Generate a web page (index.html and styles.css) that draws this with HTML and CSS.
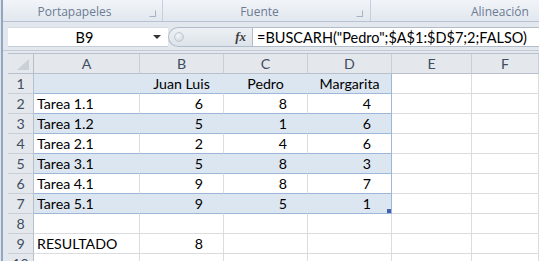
FILE: index.html
```html
<!DOCTYPE html>
<html lang="es">
<head>
    <meta charset="UTF-8">
    <title>BUSCARH</title>
    <link rel="stylesheet" href="styles.css">
</head>
<body>
    <div class="window">
        <!-- ribbon group captions -->
        <div class="ribbon">
            <div class="group group-clip">
                <span class="group-label">Portapapeles</span>
                <span class="launcher"></span>
            </div>
            <div class="group group-font">
                <span class="group-label">Fuente</span>
                <span class="launcher"></span>
            </div>
            <div class="group group-align">
                <span class="group-label">Alineación</span>
            </div>
        </div>

        <!-- name box + formula bar -->
        <div class="formula-bar">
            <div class="name-box">
                <span class="name">B9</span>
                <span class="dropdown"></span>
            </div>
            <div class="grip">
                <span class="grip-dot"></span>
                <span class="fx">fx</span>
            </div>
            <div class="formula">=BUSCARH("Pedro";$A$1:$D$7;2;FALSO)</div>
        </div>

        <!-- worksheet -->
        <div class="sheet">
            <div class="hd corner"><span class="corner-tri"></span></div>
            <div class="hd col">A</div>
            <div class="hd col">B</div>
            <div class="hd col">C</div>
            <div class="hd col">D</div>
            <div class="hd col">E</div>
            <div class="hd col">F</div>

            <div class="hd row">1</div>
            <div class="cell band"></div>
            <div class="cell band center">Juan Luis</div>
            <div class="cell band center">Pedro</div>
            <div class="cell band center last">Margarita</div>
            <div class="cell"></div>
            <div class="cell"></div>

            <div class="hd row">2</div>
            <div class="cell tbl">Tarea 1.1</div>
            <div class="cell tbl num">6</div>
            <div class="cell tbl num">8</div>
            <div class="cell tbl num last">4</div>
            <div class="cell"></div>
            <div class="cell"></div>

            <div class="hd row">3</div>
            <div class="cell band">Tarea 1.2</div>
            <div class="cell band num">5</div>
            <div class="cell band num">1</div>
            <div class="cell band num last">6</div>
            <div class="cell"></div>
            <div class="cell"></div>

            <div class="hd row">4</div>
            <div class="cell tbl">Tarea 2.1</div>
            <div class="cell tbl num">2</div>
            <div class="cell tbl num">4</div>
            <div class="cell tbl num last">6</div>
            <div class="cell"></div>
            <div class="cell"></div>

            <div class="hd row">5</div>
            <div class="cell band">Tarea 3.1</div>
            <div class="cell band num">5</div>
            <div class="cell band num">8</div>
            <div class="cell band num last">3</div>
            <div class="cell"></div>
            <div class="cell"></div>

            <div class="hd row">6</div>
            <div class="cell tbl">Tarea 4.1</div>
            <div class="cell tbl num">9</div>
            <div class="cell tbl num">8</div>
            <div class="cell tbl num last">7</div>
            <div class="cell"></div>
            <div class="cell"></div>

            <div class="hd row">7</div>
            <div class="cell band">Tarea 5.1</div>
            <div class="cell band num">9</div>
            <div class="cell band num">5</div>
            <div class="cell band num last resize">1</div>
            <div class="cell"></div>
            <div class="cell"></div>

            <div class="hd row">8</div>
            <div class="cell"></div>
            <div class="cell"></div>
            <div class="cell"></div>
            <div class="cell"></div>
            <div class="cell"></div>
            <div class="cell"></div>

            <div class="hd row">9</div>
            <div class="cell">RESULTADO</div>
            <div class="cell num">8</div>
            <div class="cell"></div>
            <div class="cell"></div>
            <div class="cell"></div>
            <div class="cell"></div>

            <div class="hd row">10</div>
            <div class="cell"></div>
            <div class="cell"></div>
            <div class="cell"></div>
            <div class="cell"></div>
            <div class="cell"></div>
            <div class="cell"></div>
        </div>
    </div>
</body>
</html>
```

FILE: styles.css
```css
* {
    margin: 0;
    padding: 0;
    box-sizing: border-box;
}

body {
    background-color: #dfe5ec;
    font-family: 'Lato', 'Liberation Sans', sans-serif;
    overflow: hidden;
}

.window {
    margin-left: 1px;
    border-left: 2px solid #94a6be;
    background-color: #e3e8ee;
    height: 261px;
}

/* ---------- ribbon ---------- */

.ribbon {
    display: flex;
    height: 22px;
    background: linear-gradient(#f1f4f8, #e2e8ef);
    border-bottom: 1px solid #b7c3d2;
}

.group {
    display: flex;
    align-items: flex-end;
    border-right: 1px solid #c4cfdc;
}

.group-clip {
    width: 160px;
}

.group-font {
    width: 208px;
}

.group-align {
    flex: 1;
    border-right: none;
    padding-left: 100px;
}

.group-label {
    flex: 1;
    text-align: center;
    font-family: 'Open Sans', sans-serif;
    font-size: 12px;
    line-height: 19px;
    color: #6a7b94;
}

.group-align .group-label {
    flex: none;
}

.launcher {
    width: 7px;
    height: 7px;
    margin: 0 6px 4px 3px;
    border: 1px solid #a8b2bf;
    border-top-color: transparent;
    border-left-color: transparent;
}

.group-font .launcher {
    margin-left: 0;
    margin-right: 7px;
}

/* ---------- formula bar ---------- */

.formula-bar {
    display: flex;
    height: 29px;
    padding: 5px 0 0 5px;
    border-bottom: 1px solid #c2cad5;
    background-color: #e3e8ee;
}

.formula-bar > div {
    height: 20px;
}

.name-box {
    display: flex;
    align-items: center;
    width: 160px;
    background-color: #fff;
    border-top: 1px solid #d4dbe4;
    border-bottom: 1px solid #c3ccd7;
}

.name {
    flex: 1;
    text-align: center;
    font-size: 14.5px;
    color: #000;
    padding-left: 8px;
}

.dropdown {
    width: 0;
    height: 0;
    margin-right: 7px;
    border-left: 4px solid transparent;
    border-right: 4px solid transparent;
    border-top: 4px solid #333;
}

.grip {
    display: flex;
    align-items: center;
    width: 84px;
    background: linear-gradient(#edf1f5, #dde3ea);
    border: 1px solid #b3bdca;
    border-right: none;
    border-radius: 10px 0 0 10px;
}

.grip-dot {
    width: 10px;
    height: 10px;
    margin-left: 5px;
    border-radius: 50%;
    background: radial-gradient(circle at 40% 35%, #f4f6f8, #c9d0d8);
    border: 1px solid #c2c9d2;
}

.fx {
    margin-left: auto;
    margin-right: 6px;
    font-family: 'Liberation Serif', serif;
    font-style: italic;
    font-weight: bold;
    font-size: 13px;
    color: #3d3d3d;
}

.formula {
    flex: 1;
    display: flex;
    align-items: center;
    padding-left: 4px;
    background-color: #fff;
    border: 1px solid #b3bdca;
    border-right: none;
    font-size: 14.5px;
    color: #000;
    white-space: nowrap;
}

/* ---------- sheet ---------- */

.sheet {
    display: grid;
    grid-template-columns: 26px 106px 84px 84px 84px 80px 1fr;
    grid-auto-rows: 20px;
    margin: 2px 0 0 5px;
    border-top: 1px solid #b8c1cd;
    background-color: #fff;
    font-size: 14.2px;
    line-height: 19px;
}

.hd {
    background-color: #e4e8ed;
    border-right: 1px solid #c8cfd8;
    border-bottom: 1px solid #c8cfd8;
    color: #3f4d60;
    text-align: center;
}

.hd.col {
    border-bottom-color: #b6bfcb;
}

.hd.row {
    border-right-color: #b6bfcb;
}

.corner {
    display: flex;
    justify-content: flex-end;
    align-items: flex-end;
    padding: 0 4px 3px 0;
    border-right-color: #b6bfcb;
    border-bottom-color: #b6bfcb;
}

.corner-tri {
    width: 0;
    height: 0;
    border-left: 12px solid transparent;
    border-bottom: 11px solid #cad0d8;
}

.cell {
    border-right: 1px solid #dadcdf;
    border-bottom: 1px solid #dadcdf;
    padding: 0 3px;
    color: #000;
    white-space: nowrap;
    overflow: hidden;
}

.cell.tbl {
    border-bottom-color: #9db7d8;
}

.cell.band {
    background-color: #dce6f1;
    border-right-color: #dce6f1;
    border-bottom-color: #9db7d8;
}

.cell.last {
    border-right-color: #9db7d8;
}

.center {
    text-align: center;
}

.num {
    text-align: right;
    padding-right: 20px;
}

.resize {
    position: relative;
}

.resize::after {
    content: "";
    position: absolute;
    right: 0;
    bottom: 0;
    width: 4px;
    height: 4px;
    background-color: #4062b0;
}
```
